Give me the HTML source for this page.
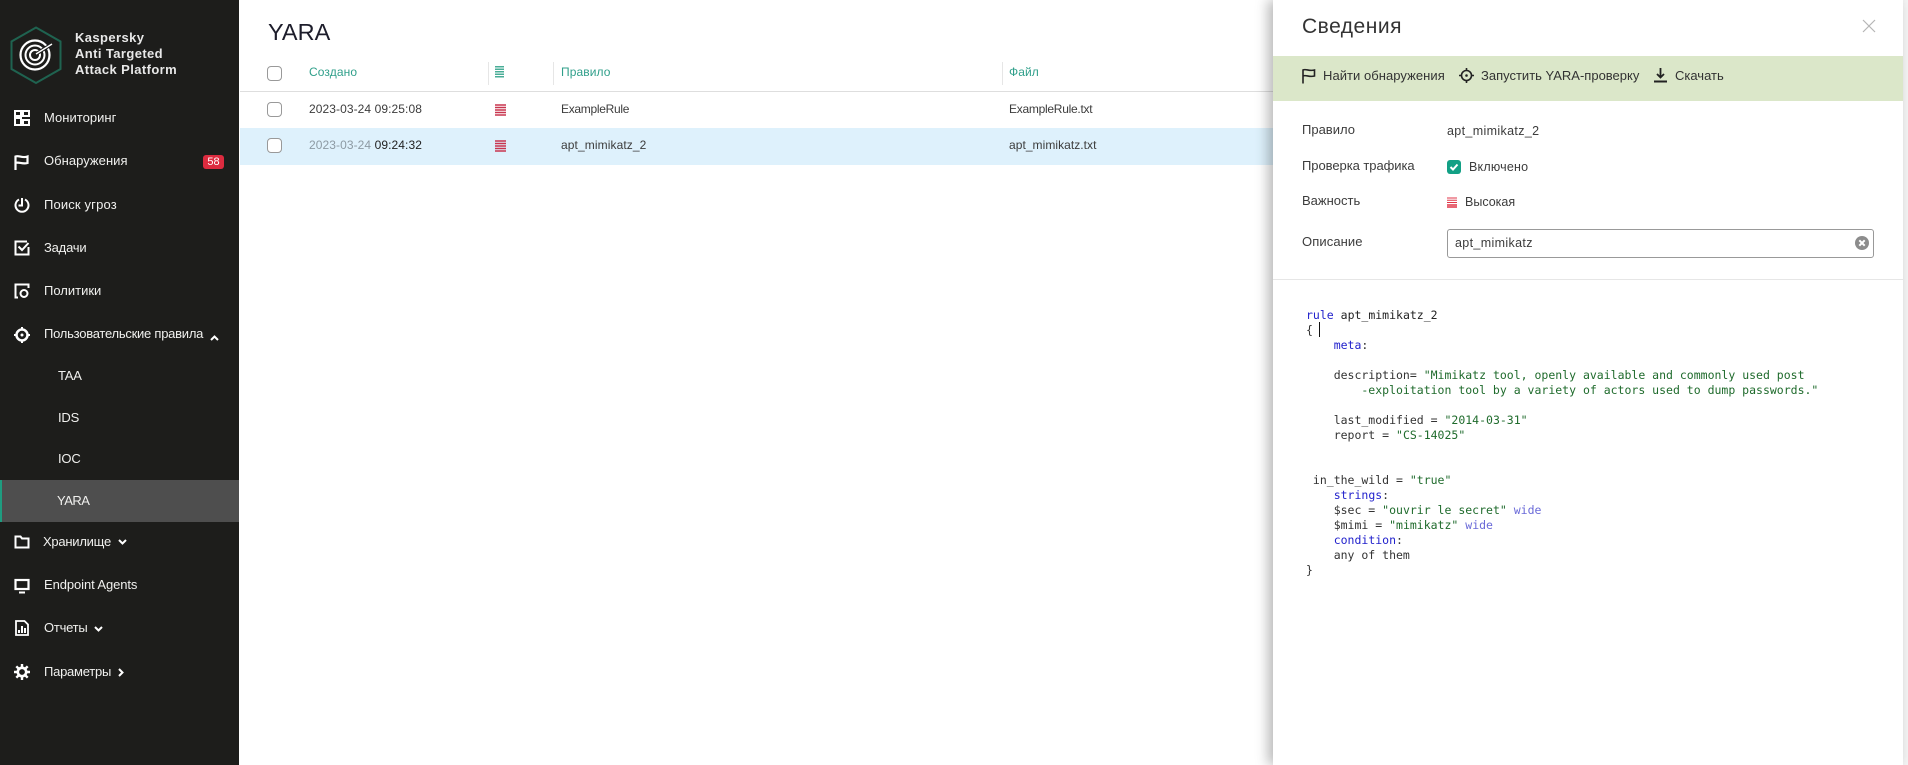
<!DOCTYPE html>
<html><head><meta charset="utf-8"><style>
html,body{margin:0;padding:0;background:#fff;}
body{width:1908px;height:765px;position:relative;overflow:hidden;font-family:"Liberation Sans",sans-serif;font-size:13px;color:#2a2a2a;}
.a{position:absolute;white-space:nowrap;line-height:20px;}
#side{position:absolute;left:0;top:0;width:239px;height:765px;background:#1d1d1b;color:#f0f0ee;}
#side svg{position:absolute;}
.s{font-size:13px;letter-spacing:.15px;}
.h{color:#2f9f8a;font-size:12px;letter-spacing:.1px;}
.g{color:#3c3c3c;}
.cb{position:absolute;width:13px;height:13px;border:1px solid #999;border-radius:4px;background:#fff;}
#panel{position:absolute;left:1273px;top:0;width:630px;height:765px;background:#fff;box-shadow:-5px 0 12px rgba(0,0,0,.28);}
#code{position:absolute;left:1306px;top:308px;font:11.5px/15px "DejaVu Sans Mono","Liberation Mono",monospace;color:#333;white-space:pre;margin:0;}
.k{color:#2222cc}.st{color:#1f6b2c}.w{color:#6a6ad8}
</style></head><body>
<div id="side">
<svg style="left:0;top:20px" width="72" height="72" viewBox="0 20 72 72" fill="none">
<path d="M36 27.5 60.5 41.5V69L36 83 11.5 69V41.5Z" stroke="#1f6350" stroke-width="2"/>
<circle cx="35" cy="55" r="14.5" stroke="#fff" stroke-width="2.2"/>
<circle cx="35" cy="55" r="9.5" stroke="#fff" stroke-width="2"/>
<circle cx="35" cy="55" r="5" stroke="#fff" stroke-width="2"/>
<path d="M36 54 52 44" stroke="#1d1d1b" stroke-width="3.5"/><path d="M36 54 52 44" stroke="#fff" stroke-width="1.4"/>
</svg>
<div class="a" style="left:75px;top:30px;font-size:13px;font-weight:bold;line-height:16px;white-space:pre;color:#e8e8e8;letter-spacing:.4px;">Kaspersky
Anti Targeted
Attack Platform</div>
<svg style="left:14px;top:110px" width="16" height="16" viewBox="0 0 16 16" fill="none" stroke="#fff" stroke-width="2"><rect x="1" y="1" width="6" height="5"/><rect x="9" y="1" width="6" height="5"/><rect x="1" y="8" width="6" height="7"/><rect x="9" y="10" width="6" height="5"/></svg>
<div class="a s" style="left:44px;top:108px;letter-spacing:.03px">Мониторинг</div>
<svg style="left:14px;top:154px" width="16" height="16" viewBox="0 0 16 16" fill="none" stroke="#fff" stroke-width="2.2"><path d="M1.5 16V2.5C5 1 8 4.5 13.5 2.5V9C8 10.500 5 7.500 1.500 9"/></svg>
<div class="a s" style="left:44px;top:151px;letter-spacing:.04px">Обнаружения</div>
<div class="a" style="left:203px;top:155px;width:21px;height:14px;background:#dc2b3f;border-radius:3px;color:#fff;font-size:11px;line-height:14px;text-align:center;">58</div>
<svg style="left:14px;top:197px" width="16" height="16" viewBox="0 0 16 16" fill="none" stroke="#fff" stroke-width="2"><path d="M5 2.500A6.500 6.500 0 1 0 11 2.500"/><path d="M8 1V8.500H4.500"/></svg>
<div class="a s" style="left:44px;top:195px">Поиск угроз</div>
<svg style="left:14px;top:240px" width="16" height="16" viewBox="0 0 16 16" fill="none" stroke="#fff" stroke-width="2"><path d="M13 1.500H1.500V14.500H14.500V7"/><path d="M4.500 6.500 8 10 14.500 3"/></svg>
<div class="a s" style="left:44px;top:238px;letter-spacing:-.2px">Задачи</div>
<svg style="left:14px;top:283px" width="16" height="16" viewBox="0 0 16 16" fill="none" stroke="#fff" stroke-width="2"><path d="M4 14.500H1.500V1.500H14.500V5"/><circle cx="10" cy="10.500" r="3.500"/></svg>
<div class="a s" style="left:44px;top:281px;letter-spacing:0">Политики</div>
<svg style="left:14px;top:327px" width="16" height="16" viewBox="0 0 16 16" fill="none" stroke="#fff"><circle cx="8" cy="8" r="5.500" stroke-width="2.500"/><path d="M8 0V3M8 13V16M0 8H3M13 8H16" stroke-width="2"/><circle cx="8" cy="8" r="1" fill="#fff"/></svg>
<div class="a s" style="left:44px;top:324px;letter-spacing:-.25px">Пользовательские правила</div>
<svg style="left:210px;top:334px" width="9" height="8" viewBox="0 0 9 8" fill="none" stroke="#fff" stroke-width="2"><path d="M1 6 4.500 2.500 8 6"/></svg>
<div class="a s" style="left:58px;top:366px;letter-spacing:-.2px">TAA</div>
<div class="a s" style="left:58px;top:408px;letter-spacing:-.2px">IDS</div>
<div class="a s" style="left:58px;top:449px;letter-spacing:-.2px">IOC</div>
<div style="position:absolute;left:0;top:480px;width:239px;height:42px;background:#4e4e4e;"></div>
<div style="position:absolute;left:0;top:480px;width:2px;height:42px;background:#1f9c80;"></div>
<div class="a s" style="left:57px;top:491px;letter-spacing:-.5px">YARA</div>
<svg style="left:14px;top:534px" width="16" height="16" viewBox="0 0 16 16" fill="none" stroke="#fff" stroke-width="2"><path d="M1.500 2.500H6.500L8 4.500H14.500V13.500H1.500Z"/></svg>
<div class="a s" style="left:43px;top:532px;letter-spacing:-.25px">Хранилище</div>
<svg style="left:118px;top:538px" width="9" height="8" viewBox="0 0 9 8" fill="none" stroke="#fff" stroke-width="2"><path d="M1 2 4.500 5.500 8 2"/></svg>
<svg style="left:14px;top:578px" width="16" height="16" viewBox="0 0 16 16" fill="none" stroke="#fff" stroke-width="2.200"><rect x="1.500" y="2" width="13" height="9"/><path d="M5 14.500H11" stroke-width="2"/></svg>
<div class="a s" style="left:44px;top:575px;letter-spacing:-.09px">Endpoint Agents</div>
<svg style="left:15px;top:620px" width="14" height="16" viewBox="0 0 14 16" fill="none" stroke="#fff" stroke-width="1.800"><path d="M1 15V1H9.500L13 4.500V15Z"/><path d="M4 13V10M7 13V6M10 13V8" stroke-width="2"/></svg>
<div class="a s" style="left:44px;top:618px;letter-spacing:-.25px">Отчеты</div>
<svg style="left:94px;top:625px" width="9" height="8" viewBox="0 0 9 8" fill="none" stroke="#fff" stroke-width="2"><path d="M1 2 4.500 5.500 8 2"/></svg>
<svg style="left:14px;top:664px" width="16" height="16" viewBox="0 0 16 16" fill="none" stroke="#fff"><circle cx="8" cy="8" r="4.200" stroke-width="2.600"/><path d="M8 0V3M8 13V16M0 8H3M13 8H16M2.300 2.300 4.500 4.500M11.500 11.500 13.700 13.700M13.700 2.300 11.500 4.500M4.500 11.500 2.300 13.700" stroke-width="2.400"/></svg>
<div class="a s" style="left:44px;top:662px;letter-spacing:-.25px">Параметры</div>
<svg style="left:117px;top:668px" width="8" height="9" viewBox="0 0 8 9" fill="none" stroke="#fff" stroke-width="2"><path d="M2 1 5.500 4.500 2 8"/></svg>
</div>

<div class="a" style="left:268px;top:18px;font-size:23.5px;line-height:28px;color:#1d1d2b;">YARA</div>
<div class="cb" style="left:267px;top:66px"></div>
<div class="a h" style="left:309px;top:62px">Создано</div>
<div style="position:absolute;left:488px;top:62px;width:1px;height:23px;background:#e6e6e6"></div>
<svg style="position:absolute;left:495px;top:66px" width="10" height="13" viewBox="0 0 10 13"><path d="M0 .750H9M0 3.250H9M0 5.750H9M0 8.250H9M0 10.750H9" stroke="#49ad97" stroke-width="1.500"/></svg>
<div style="position:absolute;left:553px;top:62px;width:1px;height:23px;background:#e6e6e6"></div>
<div class="a h" style="left:561px;top:62px">Правило</div>
<div style="position:absolute;left:1002px;top:62px;width:1px;height:23px;background:#e6e6e6"></div>
<div class="a h" style="left:1009px;top:62px">Файл</div>
<div style="position:absolute;left:240px;top:91px;width:1040px;height:1px;background:#dedede"></div>
<div style="position:absolute;left:240px;top:128px;width:1040px;height:37px;background:#def1fc"></div>

<div class="cb" style="left:267px;top:102px"></div>
<div class="a g" style="left:309px;top:99px;font-size:12px;letter-spacing:.08px">2023-03-24 09:25:08</div>
<svg style="position:absolute;left:495px;top:104px" width="11" height="12" viewBox="0 0 11 12"><path d="M0 1H11M0 3.500H11M0 6H11M0 8.500H11M0 11H11" stroke="#c8354f" stroke-width="1.400"/></svg>
<div class="a g" style="left:561px;top:99px;font-size:12px;letter-spacing:-.3px">ExampleRule</div>
<div class="a g" style="left:1009px;top:99px;font-size:12px;letter-spacing:-.27px">ExampleRule.txt</div>

<div class="cb" style="left:267px;top:138px"></div>
<div class="a" style="left:309px;top:135px;font-size:12px;letter-spacing:.08px;color:#222"><span style="color:#8d9aa3">2023-03-24</span> 09:24:32</div>
<svg style="position:absolute;left:495px;top:140px" width="11" height="12" viewBox="0 0 11 12"><path d="M0 1H11M0 3.500H11M0 6H11M0 8.500H11M0 11H11" stroke="#c8354f" stroke-width="1.400"/></svg>
<div class="a g" style="left:561px;top:135px;font-size:12px;letter-spacing:.1px">apt_mimikatz_2</div>
<div class="a g" style="left:1009px;top:135px;font-size:12px;letter-spacing:.05px">apt_mimikatz.txt</div>

<div style="position:absolute;left:1903px;top:0;width:5px;height:765px;background:#f4f4f4"></div>
<div id="panel"></div>
<div class="a" style="left:1302px;top:13px;font-size:21px;line-height:28px;color:#333;letter-spacing:.5px">Сведения</div>
<svg style="position:absolute;left:1862px;top:19px" width="14" height="14" viewBox="0 0 14 14"><path d="M1 1 13 13M13 1 1 13" stroke="#b5b5b5" stroke-width="1.200"/></svg>
<div style="position:absolute;left:1273px;top:56px;width:630px;height:45px;background:#dbe7c9"></div>
<svg style="position:absolute;left:1302px;top:68px" width="14" height="16" viewBox="0 0 14 16" fill="none" stroke="#222" stroke-width="1.600"><path d="M1 15.500V2C4 .500 7 3.500 12.500 2V8C7 9.500 4 6.500 1 8"/></svg>
<div class="a" style="left:1323px;top:66px;font-size:13px;letter-spacing:.05px;color:#333">Найти обнаружения</div>
<svg style="position:absolute;left:1459px;top:68px" width="15" height="15" viewBox="0 0 15 15" fill="none" stroke="#222"><circle cx="7.500" cy="7.500" r="5" stroke-width="1.600"/><path d="M7.500 0V3M7.500 12V15M0 7.500H3M12 7.500H15" stroke-width="1.600"/><circle cx="7.500" cy="7.500" r=".8" fill="#222"/></svg>
<div class="a" style="left:1481px;top:66px;font-size:13px;letter-spacing:0;color:#333">Запустить YARA-проверку</div>
<svg style="position:absolute;left:1653px;top:67px" width="15" height="16" viewBox="0 0 15 16" fill="none" stroke="#222" stroke-width="1.800"><path d="M7.500 1V10M4 7 7.500 10.500 11 7"/><path d="M1 14.500H14" stroke-width="2"/></svg>
<div class="a" style="left:1675px;top:66px;font-size:13px;letter-spacing:0;color:#333">Скачать</div>

<div class="a g" style="left:1302px;top:120px">Правило</div>
<div class="a g" style="left:1447px;top:121px;font-size:12.500px;letter-spacing:.35px">apt_mimikatz_2</div>
<div class="a g" style="left:1302px;top:156px;letter-spacing:-.05px">Проверка трафика</div>
<div style="position:absolute;left:1447px;top:160px;width:14px;height:14px;background:#12a085;border-radius:3px"></div>
<svg style="position:absolute;left:1447px;top:160px" width="14" height="14" viewBox="0 0 14 14" fill="none" stroke="#fff" stroke-width="2"><path d="M3.500 7 6 9.500 10.500 4.500"/></svg>
<div class="a g" style="left:1469px;top:157px;font-size:12.500px;letter-spacing:.2px">Включено</div>
<div class="a g" style="left:1302px;top:191px">Важность</div>
<svg style="position:absolute;left:1447px;top:197px" width="10" height="11" viewBox="0 0 10 11"><path d="M0 1H10M0 3.250H10M0 5.500H10" stroke="#e03648" stroke-width="1"/><path d="M0 8H10M0 10H10" stroke="#e03648" stroke-width="1.400"/></svg>
<div class="a g" style="left:1465px;top:192px;font-size:12.500px;letter-spacing:0">Высокая</div>
<div class="a g" style="left:1302px;top:232px;letter-spacing:.1px">Описание</div>
<div style="position:absolute;left:1447px;top:229px;width:425px;height:27px;border:1px solid #999;border-radius:3px;background:#fff"></div>
<div class="a g" style="left:1455px;top:233px;font-size:12.500px;letter-spacing:.35px">apt_mimikatz</div>
<svg style="position:absolute;left:1855px;top:236px" width="14" height="14" viewBox="0 0 14 14"><circle cx="7" cy="7" r="7" fill="#8c8c8c"/><path d="M4.300 4.300 9.700 9.700M9.700 4.300 4.300 9.700" stroke="#fff" stroke-width="2"/></svg>
<div style="position:absolute;left:1273px;top:279px;width:630px;height:1px;background:#e6e6e6"></div>

<div style="position:absolute;left:1319px;top:322px;width:1px;height:15px;background:#111"></div>
<pre id="code"><span class="k">rule</span> <span style="color:#222">apt_mimikatz_2</span>
{
    <span class="k">meta</span>:

    description= <span class="st">"Mimikatz tool, openly available and commonly used post</span>
<span class="st">        -exploitation tool by a variety of actors used to dump passwords."</span>

    last_modified = <span class="st">"2014-03-31"</span>
    report = <span class="st">"CS-14025"</span>


 in_the_wild = <span class="st">"true"</span>
    <span class="k">strings</span>:
    $sec = <span class="st">"ouvrir le secret"</span> <span class="w">wide</span>
    $mimi = <span class="st">"mimikatz"</span> <span class="w">wide</span>
    <span class="k">condition</span>:
    any of them
}</pre>
</body></html>
